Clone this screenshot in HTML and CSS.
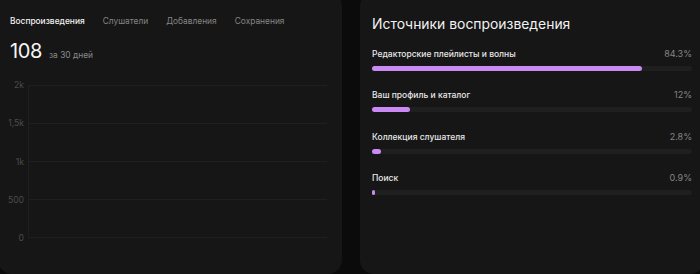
FILE: index.html
```html
<!DOCTYPE html>
<html lang="ru">
<head>
    <meta charset="UTF-8">
    <title>Статистика</title>
    <link rel="stylesheet" href="styles.css">
</head>
<body>
    <div class="stats">
        <div class="card card-chart">
            <div class="tabs">
                <span class="tab active">Воспроизведения</span>
                <span class="tab">Слушатели</span>
                <span class="tab">Добавления</span>
                <span class="tab">Сохранения</span>
            </div>
            <div class="total">
                <span class="total-value">108</span>
                <span class="total-period">за 30 дней</span>
            </div>
            <div class="chart">
                <div class="y-labels">
                    <span>2k</span>
                    <span>1,5k</span>
                    <span>1k</span>
                    <span>500</span>
                    <span>0</span>
                </div>
                <div class="plot"></div>
            </div>
        </div>

        <div class="card card-sources">
            <h2 class="sources-title">Источники воспроизведения</h2>
            <div class="source">
                <div class="source-head"><span class="source-name">Редакторские плейлисты и волны</span><span class="source-pct">84.3%</span></div>
                <div class="bar"><div class="bar-fill" style="width: 84.3%"></div></div>
            </div>
            <div class="source">
                <div class="source-head"><span class="source-name">Ваш профиль и каталог</span><span class="source-pct">12%</span></div>
                <div class="bar"><div class="bar-fill" style="width: 12%"></div></div>
            </div>
            <div class="source">
                <div class="source-head"><span class="source-name">Коллекция слушателя</span><span class="source-pct">2.8%</span></div>
                <div class="bar"><div class="bar-fill" style="width: 2.8%"></div></div>
            </div>
            <div class="source">
                <div class="source-head"><span class="source-name">Поиск</span><span class="source-pct">0.9%</span></div>
                <div class="bar"><div class="bar-fill" style="width: 0.9%"></div></div>
            </div>
        </div>
    </div>
</body>
</html>
```

FILE: styles.css
```css
html, body {
    height: 100%;
}

body {
    margin: 0;
    background-color: #0b0b0b;
    font-family: Inter, "Noto Sans", sans-serif;
    color: #f0f0f0;
    overflow: hidden;
}

.stats {
    display: flex;
    gap: 18px;
    margin: -8px 0 0 -2px;
}

.card {
    box-sizing: border-box;
    width: 344px;
    height: 282px;
    flex-shrink: 0;
    padding: 20px 12px;
    background-color: #161616;
    border-radius: 14px;
}

/* left card */
.tabs {
    display: flex;
    gap: 18px;
    margin-top: 1px;
    font-size: 8.4px;
    line-height: 17px;
}

.tab {
    color: #858585;
}

.tab.active {
    color: #f2f2f2;
    font-weight: 500;
}

.total {
    display: flex;
    align-items: baseline;
    gap: 7px;
    margin-top: 9px;
    line-height: 24px;
}

.total-value {
    font-size: 20px;
    font-weight: 400;
    color: #f5f5f5;
    letter-spacing: -0.4px;
}

.total-period {
    font-size: 8.4px;
    color: #8a8a8a;
}

.chart {
    display: flex;
    margin: 18px 3px 0 -8px;
}

.y-labels {
    width: 22px;
    display: flex;
    flex-direction: column;
    justify-content: space-between;
    align-items: flex-end;
    margin: -6px 0;
    font-size: 8.6px;
    line-height: 12px;
    color: #4c4c4c;
}

.plot {
    flex: 1;
    height: 153px;
    margin-left: 4px;
    border-left: 1px solid #1f1f1f;
    background: repeating-linear-gradient(to bottom, #1f1f1f 0 1px, transparent 1px 38px);
}

/* right card */
.sources-title {
    margin: 0 0 9px;
    font-size: 13.9px;
    font-weight: 400;
    line-height: 25px;
    color: #f2f2f2;
}

.source {
    margin-bottom: 16.33px;
}

.source-head {
    display: flex;
    justify-content: space-between;
    font-size: 8.5px;
    line-height: 16px;
}

.source-name {
    color: #e8e8e8;
    font-weight: 500;
}

.source-pct {
    font-size: 9px;
    color: #858585;
}

.bar {
    height: 5px;
    margin-top: 4px;
    background-color: #1f1f1f;
    border-radius: 3px;
}

.bar-fill {
    height: 100%;
    min-width: 3px;
    background-color: #c98af4;
    border-radius: 3px;
}
```
